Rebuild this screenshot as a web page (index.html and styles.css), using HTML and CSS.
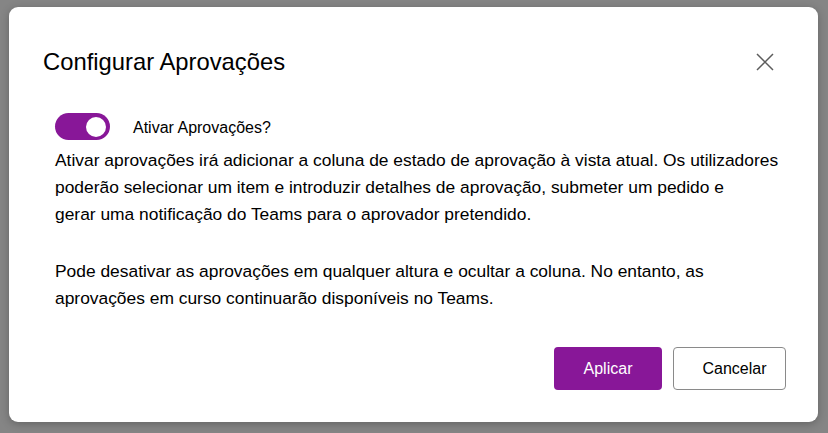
FILE: index.html
```html
<!DOCTYPE html>
<html lang="pt">
<head>
<meta charset="utf-8">
<title>Configurar Aprovações</title>
<link rel="stylesheet" href="styles.css">
</head>
<body>
<div class="overlay">
  <div class="dialog" role="dialog" aria-labelledby="dlg-title">
    <div class="header">
      <h1 id="dlg-title" class="title">Configurar Aprovações</h1>
      <button class="close" aria-label="Fechar">
        <svg width="18" height="18" viewBox="0 0 18 18"><path d="M1 1 L17 17 M17 1 L1 17" stroke="#5c5c5c" stroke-width="1.5" fill="none"/></svg>
      </button>
    </div>
    <div class="toggle-row">
      <span class="toggle"><span class="knob"></span></span>
      <span class="toggle-label">Ativar Aprovações?</span>
    </div>
    <div class="body">
      <p>Ativar aprovações irá adicionar a coluna de estado de aprovação à vista atual. Os utilizadores<br>poderão selecionar um item e introduzir detalhes de aprovação, submeter um pedido e<br>gerar uma notificação do Teams para o aprovador pretendido.</p>
      <p>Pode desativar as aprovações em qualquer altura e ocultar a coluna. No entanto, as<br>aprovações em curso continuarão disponíveis no Teams.</p>
    </div>
    <div class="footer">
      <button class="btn primary">Aplicar</button>
      <button class="btn secondary">Cancelar</button>
    </div>
  </div>
</div>
</body>
</html>
```
FILE: styles.css
```css
html, body {
  margin: 0;
  padding: 0;
  height: 100%;
}
body {
  background: #858585;
  font-family: "Liberation Sans", Arial, sans-serif;
  color: #000;
}
.overlay {
  padding: 7px 10px 0 9px;
}
.dialog {
  width: 809px;
  height: 415px;
  box-sizing: border-box;
  background: #fff;
  border-radius: 9px;
  box-shadow: 0 2px 8px rgba(0,0,0,0.25);
  display: flex;
  flex-direction: column;
}
.header {
  display: flex;
  align-items: center;
  justify-content: space-between;
  height: 28px;
  padding: 41px 44px 0 34px;
}
.title {
  margin: 0;
  font-weight: normal;
  font-size: 23.8px;
  line-height: 28px;
}
.close {
  background: none;
  border: 0;
  padding: 0;
  width: 18px;
  height: 18px;
  display: flex;
}
.toggle-row {
  display: flex;
  align-items: center;
  height: 27px;
  padding: 37px 0 0 46px;
}
.toggle {
  width: 55px;
  height: 27px;
  border-radius: 14px;
  background: #881798;
  display: flex;
  align-items: center;
  justify-content: flex-end;
  padding-right: 4px;
  box-sizing: border-box;
}
.knob {
  width: 20px;
  height: 20px;
  border-radius: 50%;
  background: #fff;
}
.toggle-label {
  margin-left: 23px;
  font-size: 16px;
  padding-top: 2px;
}
.body {
  padding: 7px 0 0 46px;
  font-size: 17.4px;
  line-height: 27px;
}
.body p {
  margin: 0 0 30px 0;
}
.footer {
  display: flex;
  justify-content: flex-end;
  gap: 11px;
  padding: 0 32px 0 0;
  margin-top: auto;
  margin-bottom: 32px;
}
.btn {
  height: 43px;
  font-family: "Liberation Sans", Arial, sans-serif;
  font-size: 16px;
  border-radius: 4px;
}
.primary {
  width: 108px;
  background: #881798;
  color: #fff;
  border: 0;
}
.secondary {
  width: 113px;
  background: #fff;
  color: #000;
  border: 1px solid #8a8a8a;
  padding: 0 0 0 10px;
}
```
